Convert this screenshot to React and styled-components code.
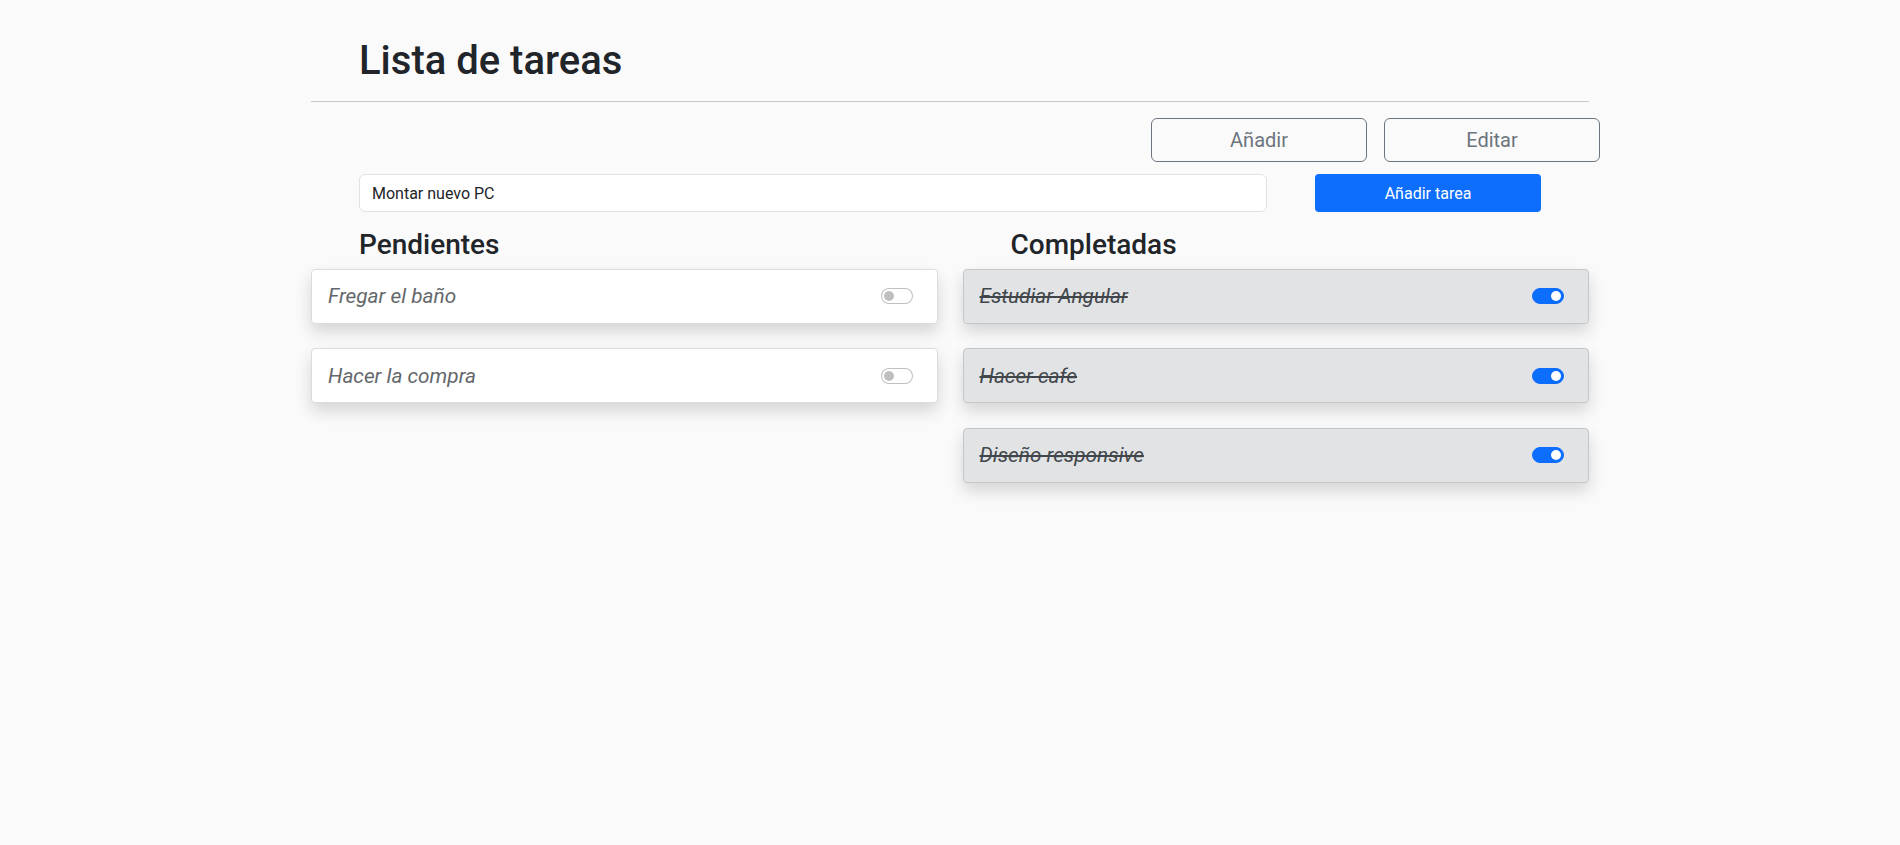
import React, { useState } from 'react';
import styled, { createGlobalStyle } from 'styled-components';

const GlobalStyle = createGlobalStyle`
  html, body {
    margin: 0;
    padding: 0;
    background: #fafafa;
    min-height: 100%;
  }
  body {
    font-family: Roboto, "Liberation Sans", sans-serif;
    color: #212529;
  }
  * {
    box-sizing: border-box;
  }
`;

const Page = styled.main`
  width: 1278px;
  margin: 0 auto;
  padding-top: 37px;
  min-height: 845px;
`;

const Title = styled.h1`
  margin: 0;
  padding-left: 48px;
  font-size: 40px;
  line-height: 1.2;
  font-weight: 500;
`;

const Divider = styled.hr`
  margin: 16px 0 0;
  border: 0;
  border-top: 1px solid #c8c8c8;
`;

const Toolbar = styled.div`
  display: flex;
  justify-content: flex-end;
  gap: 17px;
  margin: 16px -11px 0 0;
`;

const OutlineButton = styled.button`
  width: 216px;
  height: 44px;
  border: 1px solid #6c757d;
  border-radius: 6px;
  background: transparent;
  color: #6c757d;
  font-family: inherit;
  font-size: 20px;
  cursor: pointer;
`;

const AddRow = styled.form`
  display: flex;
  align-items: center;
  gap: 48px;
  margin-top: 12px;
  padding-left: 48px;
`;

const TaskInput = styled.input`
  width: 908px;
  height: 38px;
  padding: 0 12px;
  border: 1px solid #dee2e6;
  border-radius: 6px;
  background: #fff;
  color: #212529;
  font-family: inherit;
  font-size: 16px;
  outline: none;
`;

const PrimaryButton = styled.button`
  width: 226px;
  height: 38px;
  border: 0;
  border-radius: 4px;
  background: #0d6efd;
  color: #fff;
  font-family: inherit;
  font-size: 16px;
  cursor: pointer;
`;

const Columns = styled.div`
  display: grid;
  grid-template-columns: 1fr 1fr;
  column-gap: 25px;
  margin-top: 16px;
`;

const Column = styled.section`
  display: flex;
  flex-direction: column;
  gap: 24.5px;
`;

const ColumnTitle = styled.h3`
  margin: 0 0 -17.5px;
  padding-left: 48px;
  font-size: 28px;
  line-height: 1.2;
  font-weight: 500;
`;

const Card = styled.div`
  display: flex;
  align-items: center;
  justify-content: space-between;
  height: 55px;
  padding: 0 24px 0 16px;
  border: 1px solid ${({ $done }) => ($done ? '#c4c7ca' : '#dcdcdc')};
  border-radius: 4px;
  background: ${({ $done }) => ($done ? '#e2e3e5' : '#fff')};
  box-shadow: 0 8px 16px rgba(0, 0, 0, 0.15);
`;

const CardText = styled.span`
  font-size: 20.8px;
  font-style: italic;
  color: ${({ $done }) => ($done ? '#41464b' : '#63676b')};
  text-decoration: ${({ $done }) => ($done ? 'line-through' : 'none')};
  text-decoration-thickness: 2px;
`;

const Switch = styled.button`
  position: relative;
  width: 32px;
  height: 16px;
  padding: 0;
  border: 1px solid ${({ $on }) => ($on ? '#0d6efd' : 'rgba(0, 0, 0, 0.25)')};
  border-radius: 8px;
  background: ${({ $on }) => ($on ? '#0d6efd' : '#fff')};
  cursor: pointer;

  &::after {
    content: '';
    position: absolute;
    top: 2px;
    left: ${({ $on }) => ($on ? '18px' : '2px')};
    width: 10px;
    height: 10px;
    border-radius: 50%;
    background: ${({ $on }) => ($on ? '#fff' : '#bfbfbf')};
  }
`;

const initialTasks = [
  { id: 1, text: 'Fregar el baño', done: false },
  { id: 2, text: 'Hacer la compra', done: false },
  { id: 3, text: 'Estudiar Angular', done: true },
  { id: 4, text: 'Hacer cafe', done: true },
  { id: 5, text: 'Diseño responsive', done: true },
];

function TaskCard({ task, onToggle }) {
  return (
    <Card $done={task.done}>
      <CardText $done={task.done}>{task.text}</CardText>
      <Switch type="button" $on={task.done} onClick={() => onToggle(task.id)} />
    </Card>
  );
}

export default function App() {
  const [tasks, setTasks] = useState(initialTasks);
  const [draft, setDraft] = useState('Montar nuevo PC');

  function toggle(id) {
    setTasks((list) => list.map((t) => (t.id === id ? { ...t, done: !t.done } : t)));
  }

  function addTask(e) {
    e.preventDefault();
    if (!draft.trim()) return;
    setTasks((list) => [...list, { id: Date.now(), text: draft.trim(), done: false }]);
    setDraft('');
  }

  const pending = tasks.filter((t) => !t.done);
  const done = tasks.filter((t) => t.done);

  return (
    <>
      <GlobalStyle />
      <Page>
        <Title>Lista de tareas</Title>
        <Divider />
        <Toolbar>
          <OutlineButton type="button">Añadir</OutlineButton>
          <OutlineButton type="button">Editar</OutlineButton>
        </Toolbar>
        <AddRow onSubmit={addTask}>
          <TaskInput value={draft} onChange={(e) => setDraft(e.target.value)} />
          <PrimaryButton type="submit">Añadir tarea</PrimaryButton>
        </AddRow>
        <Columns>
          <Column>
            <ColumnTitle>Pendientes</ColumnTitle>
            {pending.map((t) => (
              <TaskCard key={t.id} task={t} onToggle={toggle} />
            ))}
          </Column>
          <Column>
            <ColumnTitle>Completadas</ColumnTitle>
            {done.map((t) => (
              <TaskCard key={t.id} task={t} onToggle={toggle} />
            ))}
          </Column>
        </Columns>
      </Page>
    </>
  );
}
